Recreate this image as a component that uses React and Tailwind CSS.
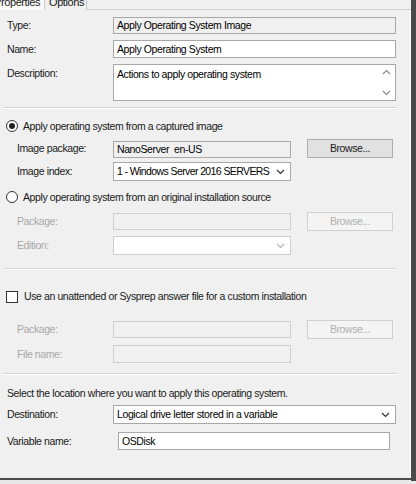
import React from "react";

const Chevron = ({ color = "#333" }) => (
  <svg width="9" height="6" viewBox="0 0 9 6"><path d="M1 1 L4.5 4.5 L8 1" fill="none" stroke={color} strokeWidth="1.2" /></svg>
);

const Label = ({ children, disabled, className = "" }) => (
  <div className={`shrink-0 whitespace-nowrap ${disabled ? "text-[#a8a8a8]" : "text-[#1a1a1a]"} ${className}`}>{children}</div>
);

const Field = ({ w, children, ro, disabled, className = "" }) => (
  <div
    className={`h-[17px] flex items-center px-[3px] border whitespace-nowrap ${
      disabled ? "border-[#cfcfcf] bg-[#f0f0f0]" : ro ? "border-[#a8a8a8] bg-[#f0f0f0]" : "border-[#a8a8a8] bg-white"
    } ${className}`}
    style={{ width: w }}
  >
    {children}
  </div>
);

const Select = ({ w, children, disabled, className = "", textClass = "" }) => (
  <div
    className={`h-[19px] flex items-center justify-between pl-[3px] pr-[5px] border whitespace-nowrap ${
      disabled ? "border-[#cfcfcf] bg-white" : "border-[#a8a8a8] bg-white"
    } ${className}`}
    style={{ width: w }}
  >
    <span className={textClass}>{children}</span>
    <Chevron color={disabled ? "#b5b5b5" : "#333"} />
  </div>
);

const Button = ({ children, disabled }) => (
  <div
    className={`w-[86px] h-[19px] flex items-center justify-center border ${
      disabled ? "border-[#d0d0d0] bg-[#f4f4f4] text-[#b0b0b0]" : "border-[#adadad] bg-[#e1e1e1] text-[#1a1a1a]"
    }`}
  >
    {children}
  </div>
);

const Sep = ({ className = "" }) => (
  <div className={`ml-[3px] w-[394px] h-[2px] border-t border-[#d5d5d5] border-b border-b-white ${className}`} />
);

export default function App() {
  return (
    <div
      className="w-[416px] h-[484px] bg-[#e8e8e8] overflow-hidden text-[10.5px] tracking-[-0.4px] leading-none"
      style={{ fontFamily: '"Liberation Sans", Arial, sans-serif' }}
    >
      <div className="w-[416px] h-[481px] flex">
        <div className="w-[411px] h-[480px] bg-[#f0f0f0] flex flex-col border-b-[2px] border-[#4a4a4a]">
          {/* tabs */}
          <div className="h-[10px] flex items-end relative shrink-0">
            <div className="w-[45px] h-[10px] bg-[#fafafa] border-r border-[#c8c8c8] relative overflow-hidden">
              <span className="absolute left-[-6px] top-[-3px] text-[11px] text-[#1a1a1a] whitespace-nowrap">Properties</span>
            </div>
            <div className="w-[42px] h-[10px] bg-[#f0f0f0] border-r border-[#c8c8c8] relative overflow-hidden">
              <span className="absolute left-[4px] top-[-3px] text-[11px] text-[#1a1a1a] whitespace-nowrap">Options</span>
            </div>
            <div className="flex-1 h-[10px] border-b border-[#d0d0d0]" />
          </div>
          <div className="flex-1 flex flex-col border-r border-[#ffffff]">
            {/* Type */}
            <div className="flex items-center mt-[7px] h-[17px]">
              <Label className="w-[113px] pl-[7px]">Type:</Label>
              <Field w={283} ro>Apply Operating System Image</Field>
            </div>
            <div className="flex items-center mt-[6px] h-[18px]">
              <Label className="w-[113px] pl-[7px]">Name:</Label>
              <Field w={283} className="h-[18px]">Apply Operating System</Field>
            </div>
            <div className="flex items-start mt-[6px] h-[37px]">
              <Label className="w-[113px] pl-[7px] pt-[4px]">Description:</Label>
              <div className="w-[283px] h-[37px] bg-white border border-[#a8a8a8] flex">
                <div className="flex-1 px-[3px] pt-[4px]">Actions to apply operating system</div>
                <div className="w-[16px] flex flex-col items-center justify-between py-[4px] pr-[1px]">
                  <svg width="9" height="6" viewBox="0 0 9 6"><path d="M1 5 L4.5 1.5 L8 5" fill="none" stroke="#888" strokeWidth="1.1" /></svg>
                  <svg width="9" height="6" viewBox="0 0 9 6"><path d="M1 1 L4.5 4.5 L8 1" fill="none" stroke="#888" strokeWidth="1.1" /></svg>
                </div>
              </div>
            </div>
            <Sep className="mt-[6px]" />
            {/* Radio 1 */}
            <div className="flex items-center mt-[10px] h-[14px] pl-[6px]">
              <div className="w-[12px] h-[12px] rounded-full border border-[#333] bg-white flex items-center justify-center mr-[5px]">
                <div className="w-[6px] h-[6px] rounded-full bg-[#222]" />
              </div>
              <span className="text-[#1a1a1a] whitespace-nowrap">Apply operating system from a captured image</span>
            </div>
            <div className="flex items-center mt-[6px] h-[19px]">
              <Label className="w-[113px] pl-[17px]">Image package:</Label>
              <Field w={178} ro className="mt-[2px]">NanoServer&nbsp; en-US</Field>
              <div className="ml-[16px]"><Button>Browse...</Button></div>
            </div>
            <div className="flex items-center mt-[4px] h-[19px]">
              <Label className="w-[113px] pl-[17px]">Image index:</Label>
              <Select w={178} textClass="tracking-[-0.6px]">1 - Windows Server 2016 SERVERS</Select>
            </div>
            {/* Radio 2 */}
            <div className="flex items-center mt-[9px] h-[14px] pl-[6px]">
              <div className="w-[12px] h-[12px] rounded-full border border-[#333] bg-white mr-[5px]" />
              <span className="text-[#1a1a1a] whitespace-nowrap">Apply operating system from an original installation source</span>
            </div>
            <div className="flex items-center mt-[8px] h-[19px]">
              <Label disabled className="w-[113px] pl-[17px]">Package:</Label>
              <Field w={178} disabled />
              <div className="ml-[16px]"><Button disabled>Browse...</Button></div>
            </div>
            <div className="flex items-center mt-[5px] h-[19px]">
              <Label disabled className="w-[113px] pl-[17px]">Edition:</Label>
              <Select w={178} disabled />
            </div>
            <Sep className="mt-[13px]" />
            {/* Checkbox */}
            <div className="flex items-center mt-[20px] h-[13px] pl-[6px]">
              <div className="w-[12px] h-[12px] border border-[#333] bg-white mr-[6px]" />
              <span className="text-[#1a1a1a] whitespace-nowrap">Use an unattended or Sysprep answer file for a custom installation</span>
            </div>
            <div className="flex items-center mt-[17px] h-[19px]">
              <Label disabled className="w-[113px] pl-[17px]">Package:</Label>
              <Field w={178} disabled />
              <div className="ml-[16px]"><Button disabled>Browse...</Button></div>
            </div>
            <div className="flex items-center mt-[6px] h-[18px]">
              <Label disabled className="w-[113px] pl-[17px]">File name:</Label>
              <Field w={178} disabled className="h-[18px]" />
            </div>
            <Sep className="mt-[10px]" />
            <div className="mt-[13px] pl-[7px] h-[12px] text-[#1a1a1a] whitespace-nowrap">Select the location where you want to apply this operating system.</div>
            <div className="flex items-center mt-[5px] h-[19px]">
              <Label className="w-[113px] pl-[7px]">Destination:</Label>
              <Select w={283}>Logical drive letter stored in a variable</Select>
            </div>
            <div className="flex items-center mt-[8px] h-[18px]">
              <Label className="w-[118px] pl-[7px]">Variable name:</Label>
              <Field w={272} className="h-[18px]">OSDisk</Field>
            </div>
          </div>
        </div>
        <div className="w-[5px] h-[481px] bg-[#4a4a4a] mt-[0px]" />
      </div>
    </div>
  );
}
